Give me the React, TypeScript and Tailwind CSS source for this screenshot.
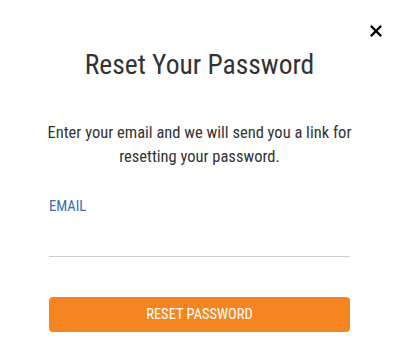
import { X } from 'lucide-react';

const FONT = { fontFamily: '"Roboto Condensed", "DejaVu Sans Condensed", sans-serif' };

export default function App() {
  return (
    <div className="relative h-[349px] w-full bg-white text-[#333]" style={FONT}>
      <button className="absolute right-[14px] top-[22px] text-black" aria-label="Close">
        <X size={18} strokeWidth={3.2} />
      </button>

      <div className="flex flex-col px-[49px] pt-[47px]">
        <h2 className="text-center text-[27.5px] leading-[36px] font-normal">Reset Your Password</h2>

        <p className="-mx-[15px] mt-[38px] text-center text-[16.5px] leading-[24px] font-normal">
          Enter your email and we will send you a link for resetting your password.
        </p>

        <label className="mt-[28px] text-[14.5px] leading-[20px] text-[#3b6db3]">EMAIL</label>
        <input
          type="email"
          className="h-[40px] w-full border-b border-[#cfcfcf] bg-transparent outline-none"
        />

        <button className="mt-[40px] h-[35px] w-full rounded-[4px] bg-[#f58521] text-[14.5px] text-white">
          RESET PASSWORD
        </button>
      </div>
    </div>
  );
}
